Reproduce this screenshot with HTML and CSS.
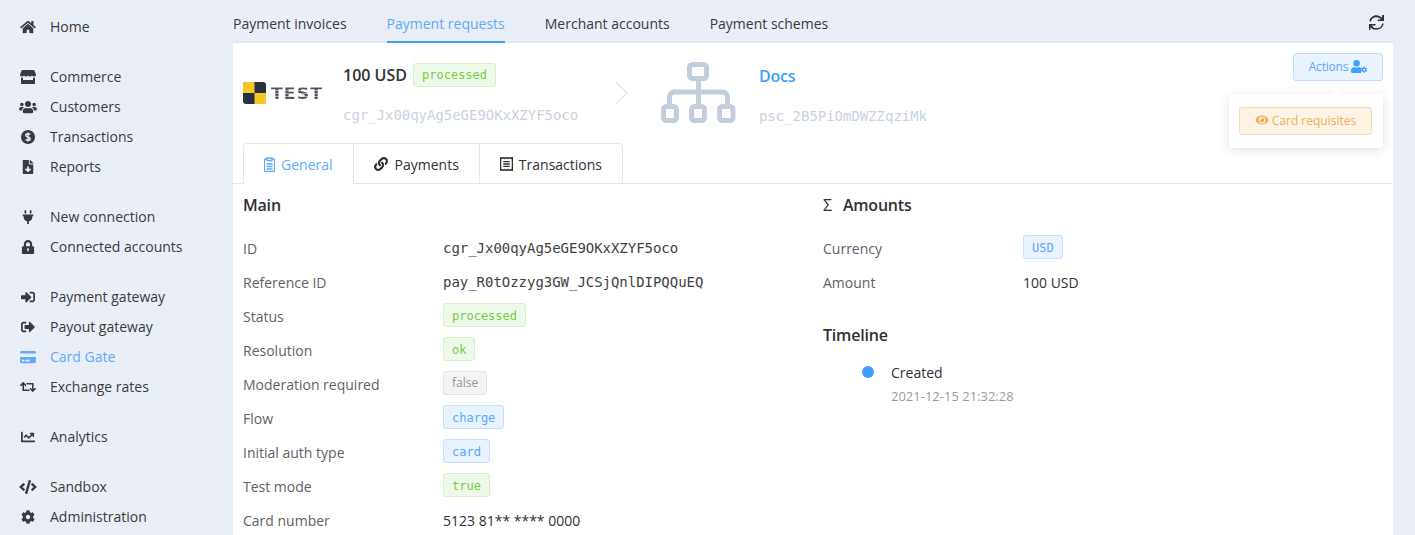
FILE: index.html
```html
<!DOCTYPE html>
<html lang="en">
<head>
    <meta charset="UTF-8">
    <meta name="viewport" content="width=device-width, initial-scale=1.0">
    <title>Payment requests</title>
    <link rel="stylesheet" href="styles.css">
</head>
<body>
<div class="page">
    <nav class="sidebar">
        <ul class="nav-group">
            <li class="nav-item"><svg class="nav-icon" viewBox="0 0 576 512"><path d="M280.37 148.26L96 300.11V464a16 16 0 0 0 16 16l112.06-.29a16 16 0 0 0 15.92-16V368a16 16 0 0 1 16-16h64a16 16 0 0 1 16 16v95.64a16 16 0 0 0 16 16.05L464 480a16 16 0 0 0 16-16V300L295.67 148.26a12.19 12.19 0 0 0-15.3 0zM571.6 251.47L488 182.56V44.05a12 12 0 0 0-12-12h-56a12 12 0 0 0-12 12v72.61L318.47 43a48 48 0 0 0-61 0L4.34 251.47a12 12 0 0 0-1.6 16.9l25.5 31A12 12 0 0 0 45.15 301l235.22-193.74a12.19 12.19 0 0 1 15.3 0L530.9 301a12 12 0 0 0 16.9-1.6l25.5-31a12 12 0 0 0-1.7-16.93z"/></svg>Home</li>
        </ul>
        <ul class="nav-group">
            <li class="nav-item"><svg class="nav-icon" viewBox="0 0 16 14"><path d="M2.6 0h10.8c.5 0 .9.3 1.1.7L16 4.400c0 1.300-1 2.100-2 2.100-.8 0-1.500-.4-2-1.100-.5.7-1.200 1.100-2 1.100s-1.500-.4-2-1.100c-.5.7-1.200 1.100-2 1.100s-1.500-.4-2-1.100c-.5.7-1.200 1.100-2 1.100-1 0-2-.8-2-2.100L1.500.7C1.700.3 2.100 0 2.600 0zM1 7.500c.3.100.7.200 1 .2.400 0 .700-.1 1-.2V10h10V7.500c.3.100.6.200 1 .2.300 0 .7-.1 1-.2V13c0 .6-.4 1-1 1H2c-.6 0-1-.4-1-1z"/></svg>Commerce</li>
            <li class="nav-item"><svg class="nav-icon nav-icon-wide" viewBox="0 0 640 512"><path d="M96 224c35.300 0 64-28.700 64-64s-28.700-64-64-64-64 28.700-64 64 28.700 64 64 64zm448 0c35.300 0 64-28.700 64-64s-28.700-64-64-64-64 28.700-64 64 28.700 64 64 64zm32 32h-64c-17.600 0-33.500 7.100-45.100 18.600 40.300 22.100 68.900 62 75.100 109.400h66c17.700 0 32-14.300 32-32v-32c0-35.300-28.700-64-64-64zm-256 0c61.900 0 112-50.100 112-112S381.900 32 320 32 208 82.100 208 144s50.100 112 112 112zm76.800 32h-8.300c-20.800 10-43.900 16-68.500 16s-47.600-6-68.500-16h-8.300C179.600 288 128 339.600 128 403.200V432c0 26.500 21.500 48 48 48h288c26.500 0 48-21.500 48-48v-28.800c0-63.600-51.600-115.200-115.200-115.200zm-223.700-13.400C161.500 263.100 145.600 256 128 256H64c-35.300 0-64 28.700-64 64v32c0 17.700 14.300 32 32 32h65.900c6.300-47.400 34.900-87.300 75.200-109.400z"/></svg>Customers</li>
            <li class="nav-item"><svg class="nav-icon" viewBox="1 1 14 14"><circle cx="8" cy="8" r="7"/><path class="dollar-s" d="M10.300 5.600C9.900 5 9.100 4.700 8 4.700c-1.300 0-2.300.6-2.300 1.600 0 2.200 4.600 1.100 4.600 3.400 0 1-1 1.600-2.300 1.600-1.100 0-1.900-.3-2.300-.9M8 3.500v9"/></svg>Transactions</li>
            <li class="nav-item"><svg class="nav-icon" viewBox="0 0 384 512"><path d="M224 136V0H24C10.700 0 0 10.700 0 24v464c0 13.300 10.700 24 24 24h336c13.300 0 24-10.700 24-24V160H248c-13.200 0-24-10.800-24-24zm76.450 211.360l-96.420 95.700c-6.650 6.610-17.390 6.610-24.040 0l-96.420-95.700C73.420 337.290 80.540 320 94.820 320H160v-80c0-8.840 7.160-16 16-16h32c8.840 0 16 7.160 16 16v80h65.180c14.280 0 21.400 17.290 11.270 27.360zM377 105L279.100 7c-4.500-4.500-10.600-7-17-7H256v128h128v-6.100c0-6.300-2.500-12.400-7-16.900z"/></svg>Reports</li>
        </ul>
        <ul class="nav-group">
            <li class="nav-item"><svg class="nav-icon" viewBox="0 0 384 512"><path d="M320 32a32 32 0 0 0-64 0v96h64zm48 128H16a16 16 0 0 0-16 16v32a16 16 0 0 0 16 16h16v32a160.070 160.070 0 0 0 128 156.800V512h64v-99.200A160.070 160.070 0 0 0 352 256v-32h16a16 16 0 0 0 16-16v-32a16 16 0 0 0-16-16zM128 32a32 32 0 0 0-64 0v96h64z"/></svg>New connection</li>
            <li class="nav-item"><svg class="nav-icon" viewBox="0 0 448 512"><path fill-rule="evenodd" d="M400 224h-24v-72C376 68.200 307.800 0 224 0S72 68.200 72 152v72H48c-26.500 0-48 21.500-48 48v192c0 26.500 21.500 48 48 48h352c26.500 0 48-21.500 48-48V272c0-26.500-21.500-48-48-48zm-104 0H152v-72c0-39.700 32.300-72 72-72s72 32.300 72 72v72zM224 300a40 40 0 0 0-20 74.600V420h40v-45.400A40 40 0 0 0 224 300z"/></svg>Connected accounts</li>
        </ul>
        <ul class="nav-group">
            <li class="nav-item"><svg class="nav-icon" viewBox="0 0 512 512"><path d="M416 448h-84c-6.600 0-12-5.400-12-12v-40c0-6.600 5.400-12 12-12h84c17.700 0 32-14.300 32-32V160c0-17.700-14.300-32-32-32h-84c-6.600 0-12-5.400-12-12V76c0-6.600 5.400-12 12-12h84c53 0 96 43 96 96v192c0 53-43 96-96 96zm-47-201L201 79c-15-15-41-4.500-41 17v96H24c-13.300 0-24 10.700-24 24v96c0 13.300 10.700 24 24 24h136v96c0 21.500 26 32 41 17l168-168c9.300-9.400 9.300-24.600 0-34z"/></svg>Payment gateway</li>
            <li class="nav-item"><svg class="nav-icon" viewBox="0 0 512 512"><path d="M497 273L329 441c-15 15-41 4.500-41-17v-96H152c-13.300 0-24-10.700-24-24v-96c0-13.300 10.700-24 24-24h136V88c0-21.400 25.900-32 41-17l168 168c9.300 9.400 9.300 24.600 0 34zM192 436v-40c0-6.600-5.400-12-12-12H96c-17.700 0-32-14.300-32-32V160c0-17.700 14.300-32 32-32h84c6.600 0 12-5.400 12-12V76c0-6.600-5.400-12-12-12H96c-53 0-96 43-96 96v192c0 53 43 96 96 96h84c6.600 0 12-5.400 12-12z"/></svg>Payout gateway</li>
            <li class="nav-item nav-active"><svg class="nav-icon" viewBox="0 0 576 512"><path d="M0 432c0 26.500 21.500 48 48 48h480c26.500 0 48-21.500 48-48V256H0v176zm192-68c0-6.600 5.400-12 12-12h136c6.600 0 12 5.400 12 12v40c0 6.600-5.400 12-12 12H204c-6.600 0-12-5.400-12-12v-40zm-128 0c0-6.600 5.400-12 12-12h72c6.600 0 12 5.400 12 12v40c0 6.600-5.400 12-12 12H76c-6.600 0-12-5.400-12-12v-40zM576 80v48H0V80c0-26.500 21.500-48 48-48h480c26.500 0 48 21.500 48 48z"/></svg>Card Gate</li>
            <li class="nav-item"><svg class="nav-icon" viewBox="0 0 640 512"><path d="M629.657 343.598L528.971 444.284c-9.373 9.372-24.568 9.372-33.941 0L394.343 343.598c-9.373-9.373-9.373-24.569 0-33.941l10.823-10.823c9.562-9.562 25.133-9.340 34.419.492L480 342.118V160H292.451a24.005 24.005 0 0 1-16.971-7.029l-16-16C244.361 121.851 255.069 96 276.451 96H520c13.255 0 24 10.745 24 24v222.118l40.416-42.792c9.285-9.831 24.856-10.054 34.419-.492l10.823 10.823c9.372 9.372 9.372 24.569-.001 33.941zm-265.138 15.431A23.999 23.999 0 0 0 347.548 352H160V169.881l40.416 42.792c9.286 9.831 24.856 10.054 34.419.491l10.822-10.822c9.373-9.373 9.373-24.569 0-33.941L144.971 67.716c-9.373-9.373-24.569-9.373-33.941 0L10.343 168.402c-9.373 9.373-9.373 24.569 0 33.941l10.822 10.822c9.562 9.562 25.133 9.340 34.419-.491L96 169.881V392c0 13.255 10.745 24 24 24h243.549c21.382 0 32.090-25.851 16.971-40.971l-16.001-16z"/></svg>Exchange rates</li>
        </ul>
        <ul class="nav-group">
            <li class="nav-item"><svg class="nav-icon" viewBox="0 0 512 512"><path d="M496 384H64V80c0-8.840-7.160-16-16-16H16C7.160 64 0 71.160 0 80v336c0 17.670 14.330 32 32 32h464c8.840 0 16-7.160 16-16v-32c0-8.840-7.160-16-16-16zM464 96H345.940c-21.380 0-32.090 25.850-16.970 40.970l32.400 32.400L288 242.750l-73.370-73.370c-12.500-12.500-32.760-12.500-45.250 0l-68.690 68.690c-6.250 6.250-6.250 16.380 0 22.630l22.620 22.620c6.250 6.250 16.380 6.250 22.630 0L192 237.250l73.370 73.370c12.500 12.500 32.760 12.500 45.250 0l96-96 32.400 32.400c15.120 15.120 40.970 4.410 40.970-16.970V112c.010-8.840-7.150-16-15.990-16z"/></svg>Analytics</li>
        </ul>
        <ul class="nav-group">
            <li class="nav-item"><svg class="nav-icon nav-icon-wide" viewBox="0 0 640 512"><path d="M278.900 511.500l-61-17.700c-6.400-1.800-10-8.500-8.200-14.900L346.200 8.700c1.800-6.400 8.500-10 14.900-8.200l61 17.700c6.400 1.800 10 8.500 8.200 14.900L293.800 503.300c-1.900 6.400-8.500 10.100-14.900 8.200zm-114-112.200l43.500-46.400c4.600-4.900 4.300-12.700-.8-17.200L117 256l90.600-79.700c5.100-4.500 5.500-12.300.8-17.200l-43.500-46.400c-4.500-4.800-12.100-5.100-17-.5L3.800 247.200c-5.100 4.700-5.100 12.800 0 17.500l144.100 135.100c4.900 4.600 12.500 4.400 17-.5zm327.200.6l144.100-135.100c5.100-4.700 5.100-12.800 0-17.500L492.100 112.100c-4.800-4.500-12.400-4.300-17 .5L431.600 159c-4.600 4.900-4.300 12.700.8 17.200L523 256l-90.600 79.700c-5.100 4.500-5.500 12.300-.8 17.200l43.500 46.400c4.500 4.900 12.100 5.100 17 .6z"/></svg>Sandbox</li>
            <li class="nav-item"><svg class="nav-icon" viewBox="0 0 512 512"><path d="M487.400 315.700l-42.600-24.600c4.300-23.200 4.300-47 0-70.200l42.600-24.600c4.900-2.800 7.100-8.600 5.500-14-11.100-35.600-30-67.800-54.700-94.600-3.800-4.100-10-5.100-14.800-2.300L380.800 110c-17.900-15.400-38.500-27.300-60.800-35.100V25.800c0-5.600-3.900-10.500-9.400-11.700-36.700-8.200-74.300-7.800-109.200 0-5.500 1.200-9.400 6.100-9.400 11.700V75c-22.200 7.900-42.800 19.800-60.800 35.100L88.700 85.500c-4.900-2.800-11-1.900-14.800 2.300-24.700 26.700-43.600 58.900-54.700 94.600-1.700 5.400.6 11.200 5.500 14L67.300 221c-4.300 23.200-4.300 47 0 70.200l-42.600 24.600c-4.900 2.800-7.100 8.600-5.500 14 11.100 35.600 30 67.800 54.700 94.600 3.800 4.100 10 5.100 14.800 2.300l42.600-24.600c17.900 15.400 38.500 27.300 60.800 35.100v49.200c0 5.600 3.900 10.500 9.400 11.700 36.700 8.200 74.300 7.800 109.200 0 5.500-1.200 9.400-6.100 9.400-11.700v-49.200c22.200-7.900 42.800-19.800 60.800-35.100l42.600 24.600c4.900 2.800 11 1.900 14.800-2.300 24.700-26.700 43.600-58.900 54.700-94.600 1.500-5.500-.7-11.300-5.600-14.100zM256 336c-44.100 0-80-35.900-80-80s35.900-80 80-80 80 35.900 80 80-35.900 80-80 80z"/></svg>Administration</li>
        </ul>
    </nav>

    <main class="content">
        <div class="top-tabs">
            <a class="top-tab">Payment invoices</a>
            <a class="top-tab top-tab-active">Payment requests</a>
            <a class="top-tab">Merchant accounts</a>
            <a class="top-tab">Payment schemes</a>
            <svg class="refresh-icon" viewBox="0 0 512 512"><path d="M440.650 12.570l4 82.770A247.160 247.160 0 0 0 255.830 8C134.730 8 33.910 94.920 12.290 209.820A12 12 0 0 0 24.090 224h29.050a12 12 0 0 0 11.670-9.260 195.910 195.910 0 0 1 347-56.940l-101.460-4.860a12 12 0 0 0-12.570 12v27.410a12 12 0 0 0 12 12H500a12 12 0 0 0 12-12V12a12 12 0 0 0-12-12h-27.370a12 12 0 0 0-11.980 12.570zM255.830 452a195.610 195.610 0 0 1-166-97.800l121.800 4.870a12 12 0 0 0 12.570-12v-27.400a12 12 0 0 0-12-12H12a12 12 0 0 0-12 12V500a12 12 0 0 0 12 12h27.350a12 12 0 0 0 12-12.600l-4.150-82.570A247.170 247.170 0 0 0 255.830 504c121.110 0 221.930-86.920 243.550-201.820a12 12 0 0 0-11.800-14.180h-29.050a12 12 0 0 0-11.670 9.260A195.860 195.860 0 0 1 255.830 452z"/></svg>
        </div>

        <div class="card">
            <div class="card-head">
                <div class="logo">
                    <svg class="logo-mark" viewBox="0 0 23 22"><rect width="23" height="22" rx="3" fill="#2b3040"/><path d="M3 0h8.500v11H0V3a3 3 0 0 1 3-3zM11.500 11H23v8a3 3 0 0 1-3 3h-8.500z" fill="#f5c823"/></svg>
                    <span class="logo-text">TEST</span>
                </div>
                <div class="head-info">
                    <div class="head-title"><span class="amount">100 USD</span><span class="badge badge-green">processed</span></div>
                    <div class="head-id">cgr_Jx00qyAg5eGE9OKxXZYF5oco</div>
                </div>
                <svg class="head-arrow" viewBox="0 0 13 22"><path d="M1 .5l11 10.500L1 21.500"/></svg>
                <svg class="scheme-icon" viewBox="0 0 76 62"><path class="scheme-lines" d="M38.500 19v23M9.500 42v-7a5 5 0 0 1 5-5h48a5 5 0 0 1 5 5v7"/><rect class="scheme-box" x="29.500" y="2.500" width="17" height="14" rx="3"/><rect class="scheme-box" x="3.500" y="44.500" width="13" height="14" rx="3"/><rect class="scheme-box" x="31.500" y="44.500" width="13" height="14" rx="3"/><rect class="scheme-box" x="59.500" y="44.500" width="13.500" height="14" rx="3"/></svg>
                <div class="head-info head-info-scheme">
                    <div class="head-title"><a class="scheme-name">Docs</a></div>
                    <div class="head-id">psc_2B5PiOmDWZZqziMk</div>
                </div>
                <div class="actions">
                    <button class="actions-btn">Actions
                        <svg class="actions-icon" viewBox="0 0 640 512"><path d="M224 256a128 128 0 1 0 0-256 128 128 0 0 0 0 256zm89.600 32h-16.700a174 174 0 0 1-145.800 0h-16.700C60.200 288 0 348.200 0 422.400V464c0 26.500 21.500 48 48 48h352c6 0 8-2 6-6-8-24-8-70 0-100 4-30 10-50 10-80-30-16-60-38-102.400-38z"/><path transform="translate(395 256) scale(.5)" d="M487.400 315.700l-42.600-24.600c4.300-23.200 4.300-47 0-70.200l42.600-24.600c4.900-2.800 7.100-8.600 5.500-14-11.100-35.600-30-67.800-54.700-94.600-3.800-4.100-10-5.100-14.800-2.300L380.800 110c-17.900-15.400-38.500-27.300-60.800-35.100V25.800c0-5.600-3.900-10.500-9.400-11.700-36.700-8.200-74.300-7.800-109.200 0-5.500 1.200-9.400 6.100-9.400 11.700V75c-22.200 7.900-42.800 19.800-60.800 35.100L88.700 85.500c-4.900-2.800-11-1.900-14.800 2.300-24.700 26.700-43.600 58.900-54.700 94.600-1.700 5.400.6 11.200 5.500 14L67.300 221c-4.300 23.200-4.300 47 0 70.200l-42.600 24.600c-4.900 2.800-7.100 8.600-5.500 14 11.100 35.600 30 67.800 54.700 94.600 3.800 4.100 10 5.100 14.800 2.300l42.600-24.600c17.900 15.400 38.500 27.300 60.800 35.100v49.200c0 5.600 3.900 10.500 9.400 11.700 36.700 8.200 74.300 7.800 109.200 0 5.500-1.200 9.400-6.100 9.400-11.700v-49.200c22.200-7.900 42.800-19.800 60.800-35.100l42.600 24.600c4.900 2.800 11 1.900 14.800-2.300 24.700-26.700 43.600-58.900 54.700-94.600 1.500-5.500-.7-11.300-5.600-14.100zM256 336c-44.100 0-80-35.900-80-80s35.900-80 80-80 80 35.900 80 80-35.900 80-80 80z"/></svg>
                    </button>
                    <div class="popover">
                        <button class="requisites-btn">
                            <svg class="requisites-icon" viewBox="0 0 576 512"><path d="M572.520 241.400C518.290 135.590 410.930 64 288 64S57.680 135.640 3.480 241.410a32.350 32.350 0 0 0 0 29.190C57.710 376.410 165.070 448 288 448s230.320-71.640 284.520-177.410a32.350 32.350 0 0 0 0-29.190zM288 400a144 144 0 1 1 144-144 143.930 143.930 0 0 1-144 144zm0-240a95.310 95.310 0 0 0-25.310 3.790 47.850 47.850 0 0 1-66.900 66.900A95.780 95.780 0 1 0 288 160z"/></svg>
                            Card requisites
                        </button>
                    </div>
                </div>
            </div>

            <div class="tabs">
                <div class="tab tab-active"><svg class="tab-icon" viewBox="0.500 0.500 11 15"><path class="tab-line" d="M3.500 2.500H2a1 1 0 0 0-1 1V14a1 1 0 0 0 1 1h8a1 1 0 0 0 1-1V3.500a1 1 0 0 0-1-1H8.500M3.500 1.500h5v2.500h-5zM3 7.500h6M3 10h6M3 12.500h6"/></svg>General</div>
                <div class="tab"><svg class="tab-icon tab-icon-link" viewBox="0 0 512 512"><path d="M326.612 185.391c59.747 59.809 58.927 155.698.36 214.590-.11.12-.24.25-.36.37l-67.200 67.200c-59.270 59.270-155.699 59.262-214.960 0-59.270-59.260-59.270-155.700 0-214.960l37.106-37.106c9.840-9.840 26.786-3.300 27.294 10.606.648 17.722 3.826 35.527 9.690 52.721 1.986 5.822.567 12.262-3.783 16.612l-13.087 13.087c-28.026 28.026-28.905 73.660-1.155 101.960 28.024 28.579 74.086 28.749 102.325.51l67.200-67.190c28.191-28.191 28.073-73.757 0-101.830-3.701-3.694-7.429-6.564-10.341-8.569a16.037 16.037 0 0 1-6.947-12.606c-.396-10.567 3.348-21.456 11.698-29.806l21.054-21.055c5.521-5.521 14.182-6.199 20.584-1.731a152.482 152.482 0 0 1 20.522 17.197zM467.547 44.449c-59.261-59.262-155.690-59.270-214.960 0l-67.200 67.200c-.12.12-.25.25-.36.37-58.566 58.892-59.387 154.781.36 214.590a152.454 152.454 0 0 0 20.521 17.196c6.402 4.468 15.064 3.789 20.584-1.731l21.054-21.055c8.350-8.350 12.094-19.239 11.698-29.806a16.037 16.037 0 0 0-6.947-12.606c-2.912-2.005-6.640-4.875-10.341-8.569-28.073-28.073-28.191-73.639 0-101.830l67.200-67.190c28.239-28.239 74.300-28.069 102.325.51 27.750 28.300 26.872 73.934-1.155 101.960l-13.087 13.087c-4.350 4.350-5.769 10.790-3.783 16.612 5.864 17.194 9.042 34.999 9.690 52.721.509 13.906 17.454 20.446 27.294 10.606l37.106-37.106c59.271-59.259 59.271-155.699.001-214.959z"/></svg>Payments</div>
                <div class="tab"><svg class="tab-icon tab-icon-receipt" viewBox="1 0.500 12 13"><path class="tab-line" d="M1.500 1l1.300.8L4.200 1l1.400.8L7 1l1.400.8L9.800 1l1.400.8 1.300-.8v12l-1.300-.8-1.400.8-1.400-.8L7 13l-1.400-.8-1.400.8-1.400-.8-1.300.8zM4 4.800h6M4 7h6M4 9.200h6"/></svg>Transactions</div>
            </div>

            <div class="details">
                <section class="details-col">
                    <h3 class="section-title">Main</h3>
                    <div class="row"><span class="row-label">ID</span><span class="mono">cgr_Jx00qyAg5eGE9OKxXZYF5oco</span></div>
                    <div class="row"><span class="row-label">Reference ID</span><span class="mono">pay_R0tOzzyg3GW_JCSjQnlDIPQQuEQ</span></div>
                    <div class="row"><span class="row-label">Status</span><span class="badge badge-green">processed</span></div>
                    <div class="row"><span class="row-label">Resolution</span><span class="badge badge-green">ok</span></div>
                    <div class="row"><span class="row-label">Moderation required</span><span class="badge badge-gray">false</span></div>
                    <div class="row"><span class="row-label">Flow</span><span class="badge badge-blue">charge</span></div>
                    <div class="row"><span class="row-label">Initial auth type</span><span class="badge badge-blue">card</span></div>
                    <div class="row"><span class="row-label">Test mode</span><span class="badge badge-green">true</span></div>
                    <div class="row"><span class="row-label">Card number</span><span>5123 81** **** 0000</span></div>
                </section>
                <section class="details-col">
                    <h3 class="section-title"><span class="sigma">Σ</span>Amounts</h3>
                    <div class="row"><span class="row-label">Currency</span><span class="badge badge-blue">USD</span></div>
                    <div class="row"><span class="row-label">Amount</span><span>100 USD</span></div>
                    <h3 class="section-title timeline-title">Timeline</h3>
                    <div class="timeline-item">
                        <span class="timeline-dot"></span>
                        <div>
                            <div class="timeline-text">Created</div>
                            <div class="timeline-date">2021-12-15 21:32:28</div>
                        </div>
                    </div>
                </section>
            </div>
        </div>
    </main>
</div>
</body>
</html>
```

FILE: styles.css
```css
* {
    box-sizing: border-box;
}

html, body {
    margin: 0;
    height: 100%;
    overflow: hidden;
}

body {
    background-color: #eaeef6;
    color: #303133;
    font-family: "Open Sans", sans-serif;
    font-size: 14px;
}

.page {
    display: flex;
    height: 100vh;
}

/* sidebar */
.sidebar {
    width: 233px;
    flex-shrink: 0;
    padding-top: 11px;
}

.nav-group {
    list-style: none;
    margin: 0 0 20px;
    padding: 0;
}

.nav-item {
    display: flex;
    align-items: center;
    height: 30px;
    padding-left: 20px;
    color: #3a3a3c;
}

.nav-icon {
    width: 16px;
    height: 14px;
    margin-top: 2px;
    margin-right: 14px;
    fill: currentColor;
    flex-shrink: 0;
}

.nav-icon-wide {
    width: 18px;
    margin-left: -1px;
    margin-right: 13px;
}

.dollar-s {
    fill: none;
    stroke: #eaeef6;
    stroke-width: 1.4;
}

.nav-active {
    color: #5eaafc;
}

/* top tabs */
.content {
    width: 1160px;
    flex-shrink: 0;
    display: flex;
    flex-direction: column;
}

.top-tabs {
    display: flex;
    align-items: stretch;
    gap: 40px;
    height: 43px;
    flex-shrink: 0;
    border-bottom: 2px solid #e3e7ef;
}

.top-tab {
    display: flex;
    align-items: center;
    height: 43px;
    padding-top: 4px;
    color: #3a3a3c;
}

.top-tab-active {
    padding-top: 6px;
    color: #5eaafc;
    border-bottom: 2px solid #409eff;
}

.refresh-icon {
    width: 15px;
    height: 15px;
    margin: 15px 9px 0 auto;
    fill: #2f3133;
}

/* card */
.card {
    flex: 1;
    background-color: #fff;
}

.card-head {
    display: flex;
    height: 100px;
    padding-left: 10px;
}

.logo {
    display: flex;
    align-items: center;
    gap: 5px;
    width: 80px;
    height: 22px;
    margin-top: 39px;
    margin-right: 20px;
}

.logo-mark {
    width: 23px;
    height: 22px;
    flex-shrink: 0;
}

.logo-text {
    padding-top: 1px;
    background: repeating-linear-gradient(#4f545c 0, #4f545c 2px, #a9adb3 2px, #a9adb3 3px);
    -webkit-background-clip: text;
    background-clip: text;
    color: transparent;
    font-family: "DejaVu Sans", sans-serif;
    font-size: 16px;
    font-weight: bold;
    letter-spacing: 1px;
    line-height: 22px;
    transform: scaleX(1.08);
    transform-origin: left center;
}

.head-info {
    width: 272px;
    padding-top: 20px;
}

.head-info-scheme {
    width: auto;
}

.head-title {
    display: flex;
    align-items: center;
    height: 24px;
    gap: 6px;
}

.amount {
    font-size: 16px;
    font-weight: 600;
}

.scheme-name {
    margin-top: 2px;
    color: #409eff;
    font-size: 16px;
    font-weight: 600;
    letter-spacing: -0.2px;
}

.head-id {
    margin-top: 18px;
    color: #c9d2de;
    font-family: "DejaVu Sans Mono", monospace;
    font-size: 14px;
    line-height: 20px;
    letter-spacing: -0.03px;
}

.head-info-scheme .head-id {
    margin-top: 19px;
}

.head-arrow {
    width: 13px;
    height: 22px;
    margin-top: 39px;
    fill: none;
    stroke: #cfd5de;
    stroke-width: 1;
}

.scheme-icon {
    width: 76px;
    height: 62px;
    margin: 19px 23px 0 32px;
    flex-shrink: 0;
}

.scheme-lines {
    fill: none;
    stroke: #c3cedc;
    stroke-width: 5;
}

.scheme-box {
    fill: #fff;
    stroke: #c3cedc;
    stroke-width: 5;
}

/* actions */
.actions {
    position: relative;
    margin-left: auto;
    margin-right: 10px;
    margin-top: 10px;
}

.actions-btn {
    display: flex;
    align-items: center;
    justify-content: center;
    gap: 3px;
    width: 90px;
    height: 28px;
    padding: 0 0 1px;
    background-color: #e8f3ff;
    border: 1px solid #c0ddff;
    border-radius: 3px;
    color: #5ba8fb;
    font-family: "Open Sans", sans-serif;
    font-size: 12px;
    letter-spacing: -0.2px;
}

.actions-icon {
    width: 16px;
    height: 13px;
    fill: #409eff;
}

.popover {
    position: absolute;
    top: 41px;
    right: 0;
    width: 154px;
    height: 54px;
    padding: 13px 11px 0 10px;
    background-color: #fff;
    border-radius: 4px;
    box-shadow: 0 2px 12px rgba(0, 0, 0, 0.12);
}

.popover::before {
    content: "";
    position: absolute;
    top: -4px;
    left: 105px;
    width: 9px;
    height: 9px;
    background-color: #fff;
    transform: rotate(45deg);
}

.requisites-btn {
    display: flex;
    align-items: center;
    justify-content: center;
    gap: 3px;
    position: relative;
    width: 133px;
    height: 28px;
    padding: 0 0 2px;
    background-color: #fdf3e5;
    border: 1px solid #f7dcb0;
    border-radius: 3px;
    color: #f0ad55;
    font-family: "Open Sans", sans-serif;
    font-size: 12px;
}

.requisites-icon {
    width: 14px;
    height: 12px;
    fill: #f0ad55;
}

/* tabs */
.tabs {
    display: flex;
    height: 41px;
    padding-left: 10px;
    border-bottom: 1px solid #e4e7ed;
}

.tab {
    display: flex;
    align-items: center;
    height: 41px;
    padding: 0 20px;
    border: 1px solid #e4e7ed;
    border-left: none;
    border-bottom: none;
}

.tab:first-child {
    border-left: 1px solid #e4e7ed;
    border-top-left-radius: 4px;
}

.tab:last-child {
    border-top-right-radius: 4px;
}

.tab-active {
    background-color: #fff;
    color: #5eaafc;
}

.tab-icon {
    width: 11px;
    height: 15px;
    margin-right: 6px;
    fill: currentColor;
}

.tab-icon-link {
    width: 14px;
    height: 14px;
    margin-right: 7px;
}

.tab-icon-receipt {
    width: 13px;
    height: 14px;
    margin-right: 6px;
}

.tab-line {
    fill: none;
    stroke: currentColor;
    stroke-width: 1.3;
}

/* details */
.details {
    display: flex;
    padding-left: 10px;
}

.details-col {
    width: 580px;
    flex-shrink: 0;
    padding-top: 10px;
}

.section-title {
    margin: 0 0 15px;
    font-size: 16px;
    font-weight: 600;
    line-height: 22px;
    letter-spacing: -0.2px;
}

.sigma {
    margin-right: 11px;
    font-weight: 500;
}

.timeline-title {
    margin-top: 25px;
    margin-bottom: 0;
}

.row {
    display: flex;
    align-items: center;
    height: 34px;
}

.row-label {
    width: 200px;
    flex-shrink: 0;
    color: #606266;
}

.mono {
    color: #3f4144;
    font-family: "DejaVu Sans Mono", monospace;
    letter-spacing: -0.03px;
}

.badge {
    display: inline-block;
    height: 24px;
    padding: 0 8px;
    border: 1px solid;
    border-radius: 3px;
    font-family: "DejaVu Sans Mono", monospace;
    font-size: 12px;
    line-height: 22px;
}

.row .badge {
    margin-top: -2px;
    line-height: 24px;
}

.badge-green {
    background-color: #eff9e9;
    border-color: #d5f0c7;
    color: #75cc46;
}

.badge-blue {
    background-color: #e8f3ff;
    border-color: #c5e0ff;
    color: #5ba8fb;
}

.badge-gray {
    background-color: #f4f4f5;
    border-color: #e2e3e5;
    color: #969799;
    font-family: "Open Sans", sans-serif;
}

.row .badge-gray {
    line-height: 22px;
}

.timeline-item {
    display: flex;
    margin-top: 17px;
    padding-left: 39px;
}

.timeline-dot {
    width: 12px;
    height: 12px;
    margin: 3px 17px 0 0;
    background-color: #409eff;
    border-radius: 50%;
}

.timeline-text {
    line-height: 20px;
}

.timeline-date {
    margin-top: 3px;
    color: #999b9e;
    font-size: 13px;
    line-height: 20px;
}
```
